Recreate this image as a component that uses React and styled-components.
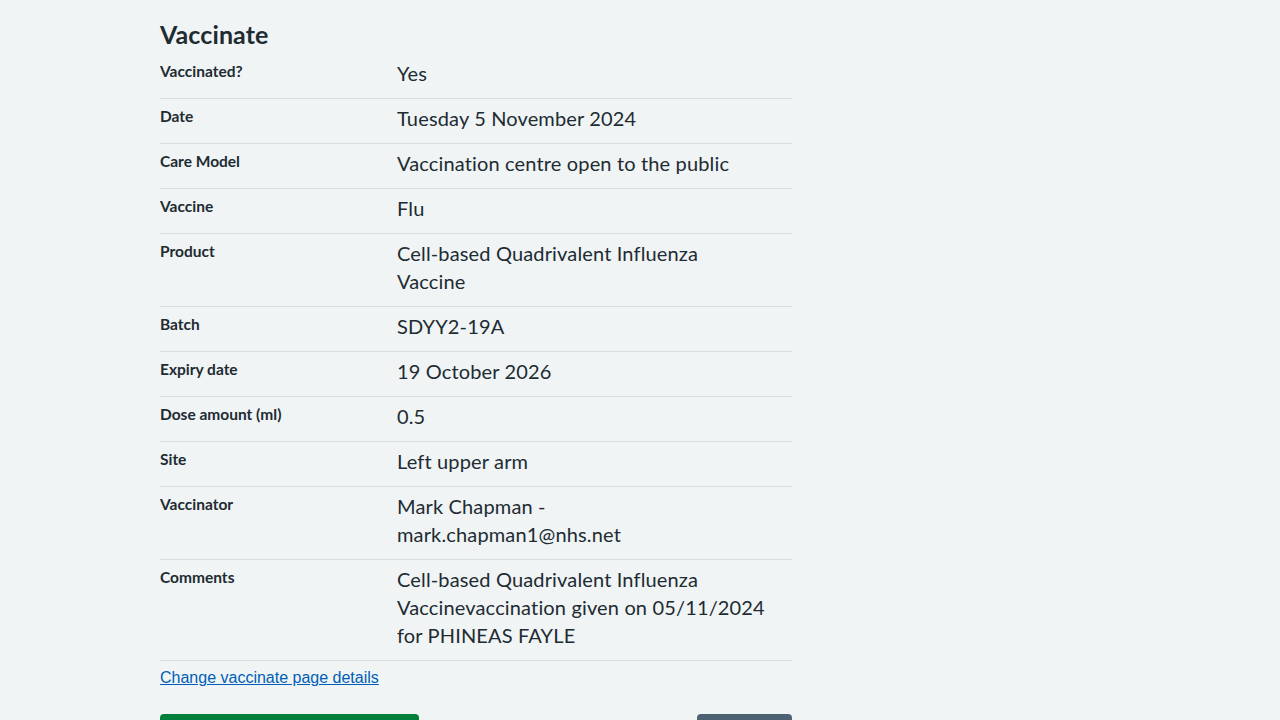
import React from "react";
import styled, { createGlobalStyle } from "styled-components";

const GlobalStyle = createGlobalStyle`
  html, body {
    margin: 0;
    padding: 0;
    background: #f0f4f5;
  }
  body {
    font-family: "Lato", "Noto Sans", sans-serif;
    color: #212b32;
  }
`;

const Page = styled.main`
  width: 632px;
  margin-left: 160px;
  padding-top: 18px;
`;

const Heading = styled.h2`
  margin: 0 0 4px;
  font-size: 25px;
  line-height: 32px;
  font-weight: 700;
  letter-spacing: 0.1px;
`;

const SummaryList = styled.dl`
  margin: 0 0 6px;
`;

const Row = styled.div`
  display: grid;
  grid-template-columns: 237px 1fr;
  border-bottom: 1px solid #d8dde0;
`;

const Key = styled.dt`
  padding: 7px 24px 9px 0;
  font-size: 15.5px;
  line-height: 20px;
  font-weight: 700;
`;

const Value = styled.dd`
  margin: 0;
  padding: 5px 24px 11px 0;
  font-size: 20px;
  line-height: 28px;
  letter-spacing: 0.15px;
`;

const ChangeLink = styled.a`
  font-family: "Liberation Sans", Arial, sans-serif;
  font-size: 16px;
  line-height: 18px;
  color: #005eb8;
  text-decoration: underline;
`;

const Actions = styled.div`
  display: flex;
  justify-content: space-between;
  margin-top: 27px;
`;

const Button = styled.button`
  border: 0;
  border-radius: 4px;
  padding: 12px 16px;
  font-family: inherit;
  font-size: 19px;
  font-weight: 700;
  color: #fff;
  background: ${({ $variant }) => ($variant === "secondary" ? "#4c6272" : "#007f3b")};
  box-shadow: 0 4px 0 ${({ $variant }) => ($variant === "secondary" ? "#263139" : "#00401e")};
  width: ${({ $width }) => $width}px;
`;

const rows = [
  ["Vaccinated?", "Yes"],
  ["Date", "Tuesday 5 November 2024"],
  ["Care Model", "Vaccination centre open to the public"],
  ["Vaccine", "Flu"],
  ["Product", "Cell-based Quadrivalent Influenza Vaccine"],
  ["Batch", "SDYY2-19A"],
  ["Expiry date", "19 October 2026"],
  ["Dose amount (ml)", "0.5"],
  ["Site", "Left upper arm"],
  ["Vaccinator", "Mark Chapman - mark.chapman1@nhs.net"],
  [
    "Comments",
    "Cell-based Quadrivalent Influenza Vaccinevaccination given on 05/11/2024 for PHINEAS FAYLE",
  ],
];

export default function App() {
  return (
    <>
      <GlobalStyle />
      <Page>
        <Heading>Vaccinate</Heading>
        <SummaryList>
          {rows.map(([k, v]) => (
            <Row key={k}>
              <Key>{k}</Key>
              <Value>{v}</Value>
            </Row>
          ))}
        </SummaryList>
        <ChangeLink href="#">Change vaccinate page details</ChangeLink>
        <Actions>
          <Button $width={259}>Confirm and save</Button>
          <Button $variant="secondary" $width={95}>Back</Button>
        </Actions>
      </Page>
    </>
  );
}
